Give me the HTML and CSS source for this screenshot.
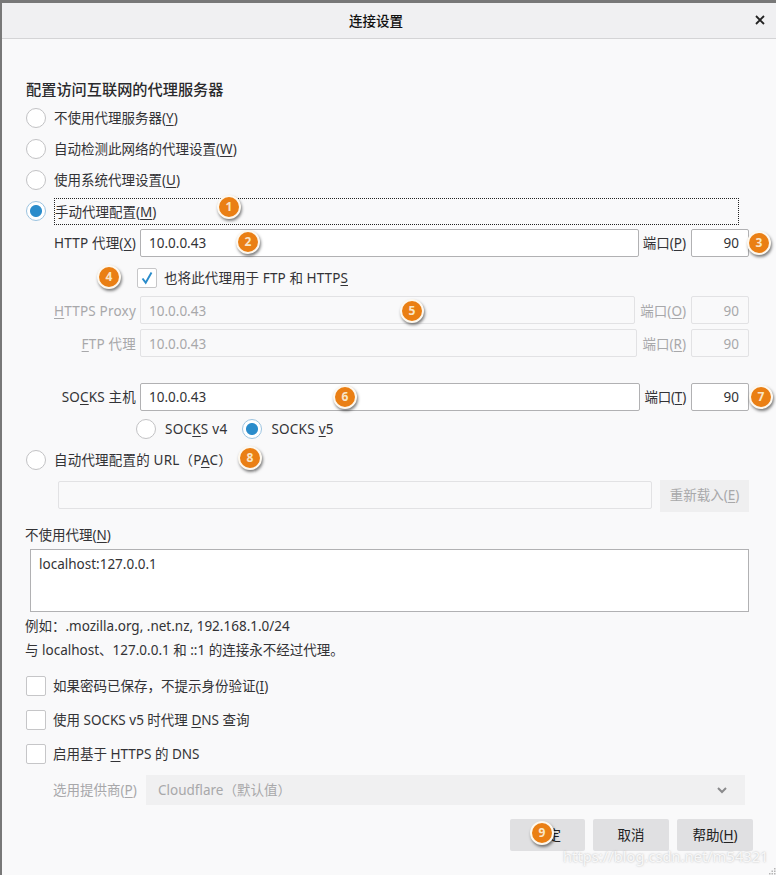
FILE: index.html
```html
<!DOCTYPE html>
<html lang="zh-CN">
<head>
<meta charset="utf-8">
<title>连接设置</title>
<link rel="stylesheet" href="styles.css">
</head>
<body>
<div class="window">
  <header class="titlebar">
    <h1 class="title">连接设置</h1>
    <svg class="close" width="12" height="12" viewBox="0 0 12 12"><path d="M2 2l8 8M10 2l-8 8" stroke="#222" stroke-width="1.8" fill="none"/></svg>
  </header>
  <main class="main">
    <h2 class="heading">配置访问互联网的代理服务器</h2>
    <div class="radio-row"><span class="radio"></span><span>不使用代理服务器(<u>Y</u>)</span></div>
    <div class="radio-row"><span class="radio"></span><span>自动检测此网络的代理设置(<u>W</u>)</span></div>
    <div class="radio-row"><span class="radio"></span><span>使用系统代理设置(<u>U</u>)</span></div>
    <div class="radio-row"><span class="radio on"></span><span class="focus-label">手动代理配置(<u>M</u>)</span></div>

    <div class="field-row http-row">
      <label class="field-label">HTTP 代理(<u>X</u>)</label>
      <input class="text-input" value="10.0.0.43" readonly>
      <label class="port-label">端口(<u>P</u>)</label>
      <input class="port-input" value="90" readonly>
    </div>
    <div class="share-row">
      <span class="checkbox"><svg width="20" height="20" viewBox="0 0 20 20"><path d="M5.5 10.5l3.2 4.2L14.5 4.5" stroke="#2a8ccb" stroke-width="1.9" fill="none"/></svg></span>
      <span>也将此代理用于 FTP 和 HTTP<u>S</u></span>
    </div>
    <div class="field-row https-row disabled">
      <label class="field-label"><u>H</u>TTPS Proxy</label>
      <input class="text-input" value="10.0.0.43" disabled>
      <label class="port-label">端口(<u>O</u>)</label>
      <input class="port-input" value="90" disabled>
    </div>
    <div class="field-row ftp-row disabled">
      <label class="field-label"><u>F</u>TP 代理</label>
      <input class="text-input" value="10.0.0.43" disabled>
      <label class="port-label">端口(<u>R</u>)</label>
      <input class="port-input" value="90" disabled>
    </div>
    <div class="field-row socks-row">
      <label class="field-label">SO<u>C</u>KS 主机</label>
      <input class="text-input" value="10.0.0.43" readonly>
      <label class="port-label">端口(<u>T</u>)</label>
      <input class="port-input" value="90" readonly>
    </div>
    <div class="socks-version">
      <span class="radio"></span><span class="version-label">SOC<u>K</u>S v4</span>
      <span class="radio on"></span><span class="version-label">SOCKS <u>v</u>5</span>
    </div>
    <div class="radio-row pac-row"><span class="radio"></span><span class="pac-label">自动代理配置的 URL（P<u>A</u>C）</span></div>
    <div class="pac-field">
      <input class="text-input pac-input" disabled>
      <span class="reload">重新载入(<u>E</u>)</span>
    </div>

    <label class="noproxy-label">不使用代理(<u>N</u>)</label>
    <textarea class="noproxy" readonly>localhost:127.0.0.1</textarea>
    <p class="note note-first">例如：.mozilla.org, .net.nz, 192.168.1.0/24</p>
    <p class="note">与 localhost、127.0.0.1 和 ::1 的连接永不经过代理。</p>

    <div class="check-row check-first"><span class="checkbox"></span><span>如果密码已保存，不提示身份验证(<u>I</u>)</span></div>
    <div class="check-row"><span class="checkbox"></span><span>使用 SOCKS v5 时代理 <u>D</u>NS 查询</span></div>
    <div class="check-row"><span class="checkbox"></span><span>启用基于 <u>H</u>TTPS 的 DNS</span></div>
    <div class="provider-row">
      <label class="provider-label">选用提供商(<u>P</u>)</label>
      <div class="select"><span>Cloudflare（默认值）</span>
        <svg width="12" height="8" viewBox="0 0 12 8"><path d="M2 2l4 4 4-4" stroke="#8a8a8c" stroke-width="2" fill="none"/></svg>
      </div>
    </div>
    <div class="actions">
      <button class="btn">确定</button>
      <button class="btn">取消</button>
      <button class="btn">帮助(<u>H</u>)</button>
    </div>
  </main>

  <span class="badge b1">1</span>
  <span class="badge b2">2</span>
  <span class="badge b3">3</span>
  <span class="badge b4">4</span>
  <span class="badge b5">5</span>
  <span class="badge b6">6</span>
  <span class="badge b7">7</span>
  <span class="badge b8">8</span>
  <span class="badge b9">9</span>
  <span class="watermark">https://blog.csdn.net/m54321</span>
  <svg class="grip" width="7" height="7" viewBox="0 0 7 7"><path d="M5 0h1.500v1.500H5zM2.500 2.500H4V4H2.500zM5 2.500h1.500V4H5zM0 5h1.500v1.500H0zM2.500 5H4v1.500H2.500zM5 5h1.500v1.500H5z" fill="#b5b5b5"/></svg>
</div>
</body>
</html>
```
FILE: styles.css
```css
* { box-sizing: border-box; }
html, body { margin: 0; padding: 0; }
body {
  width: 776px;
  height: 875px;
  overflow: hidden;
  font-family: "Noto Sans", "Noto Sans CJK SC", sans-serif;
  font-size: 13.5px;
  line-height: 20px;
  color: #333336;
}
u { text-underline-offset: 2px; text-decoration-thickness: 1px; }
.window {
  position: relative;
  width: 776px;
  height: 875px;
  background: #f9f9fa;
  border-top: 3px solid #787878;
  border-left: 2px solid #787878;
  overflow: hidden;
}
.titlebar {
  height: 36px;
  background: #f0f0f2;
  border-bottom: 1px solid #d4d4d6;
  display: flex;
  align-items: center;
  justify-content: center;
  position: relative;
  padding-right: 26px;
}
.title { margin: 0; font-size: 13.5px; font-weight: 500; color: #111; }
.close { position: absolute; right: 10px; top: 11px; }
.main { padding: 40px 27px 0 24px; }
.heading { margin: 0 0 3px; font-size: 15.2px; line-height: 20px; font-weight: 500; color: #2a2a2c; }

.radio-row { height: 31px; display: flex; align-items: center; gap: 8px; }
.radio {
  flex: none;
  width: 20px;
  height: 20px;
  border-radius: 50%;
  background: #fff;
  border: 1px solid #c2c2c4;
  display: block;
}
.radio.on {
  background: radial-gradient(circle, #2a8ccb 0 5.5px, #fff 6.5px);
  border-color: #9cc4e0;
}
.focus-label {
  flex: 1;
  height: 27px;
  line-height: 26px;
  margin: 2px 10px 0 0;
  border: 1px dotted #222;
}

.field-row { display: flex; align-items: center; height: 28px; }
.field-label { width: 110px; text-align: right; margin-right: 4px; flex: none; white-space: nowrap; letter-spacing: .2px; }
.text-input, .port-input {
  height: 28px;
  border: 1px solid #b1b1b3;
  border-radius: 2px;
  background: #fff;
  font: inherit;
  color: #333336;
  outline: none;
  padding: 0 8px;
}
.port-input { padding: 0 9px; }
.text-input { flex: 1; min-width: 0; }
.port-label { margin: 0 5px; flex: none; white-space: nowrap; }
.port-input { width: 58px; flex: none; text-align: right; }
.http-row { margin-top: 3px; }
.http-row .port-label { margin-left: 4px; }
.https-row { margin-top: 8px; }
.ftp-row { margin-top: 5px; }
.socks-row { margin-top: 26px; }
.socks-row .port-label { margin-left: 4px; letter-spacing: -.2px; }
.disabled, .disabled .text-input, .disabled .port-input { color: #a8a8aa; }
.disabled .text-input, .disabled .port-input, .pac-input { background: #f9f9fa; border-color: #e2e2e4; }
.disabled .text-input, .disabled .port-input { padding-top: 2px; }
.disabled .field-label, .disabled .port-label { margin-top: 2px; }

.share-row {
  display: flex;
  align-items: center;
  gap: 7px;
  height: 20px;
  margin-top: 11px;
  padding-left: 111px;
  letter-spacing: .1px;
}
.checkbox {
  flex: none;
  display: block;
  width: 20px;
  height: 20px;
  background: #fff;
  border: 1px solid #c6c6c8;
  border-radius: 2px;
}
.checkbox svg { display: block; margin: -1px; }

.socks-version { display: flex; align-items: center; margin-top: 8px; padding-left: 110px; height: 20px; }
.version-label { margin: 0 15px 0 9px; letter-spacing: .25px; }
.pac-row { margin-top: 5px; }
.pac-label { letter-spacing: .2px; }
.pac-field { display: flex; gap: 8px; margin-top: 5px; height: 32px; }
.pac-input { margin: 1px 0 0 32px; height: 28px; }
.reload {
  flex: none;
  width: 89px;
  height: 32px;
  line-height: 31px;
  text-align: center;
  background: #efeff0;
  color: #a8a8aa;
  font-size: 13.5px;
}

.noproxy-label { display: block; margin: 13px 0 0 -1px; }
.noproxy {
  display: block;
  width: 719px;
  height: 63px;
  margin: 4px 0 0 4px;
  padding: 4px 8px;
  border: 1px solid #b1b1b3;
  background: #fff;
  font: inherit;
  color: #333336;
  resize: none;
  outline: none;
}
.note { margin: 4px 0 0 -1px; }
.check-row { height: 34px; display: flex; align-items: center; gap: 7px; }
.check-first { margin-top: 9px; }
.provider-row { display: flex; align-items: center; margin: 4px 4px 0 27px; height: 30px; color: #a8a8aa; }
.provider-label { width: 93px; flex: none; }
.select {
  flex: 1;
  height: 30px;
  background: #f0f0f1;
  display: flex;
  align-items: center;
  justify-content: space-between;
  padding: 0 17px 0 12px;
}
.actions { display: flex; justify-content: flex-end; gap: 8px; margin: 14px -4px 0 0; }
.btn {
  width: 76px;
  height: 32px;
  border: 0;
  border-radius: 2px;
  background: #e0e0e2;
  font: inherit;
  color: #222;
  padding: 0;
}
.btn:first-child { width: 75px; }

.badge {
  position: absolute;
  width: 24px;
  height: 24px;
  border-radius: 50%;
  background: #ea7f14;
  border: 2px solid #fdf8ef;
  box-shadow: 1px 2px 3px rgba(0, 0, 0, .5);
  color: #f8e6c8;
  font-size: 12px;
  line-height: 20px;
  font-weight: 700;
  text-align: center;
}
.b1 { left: 215px; top: 192px; }
.b2 { left: 234px; top: 227px; }
.b3 { left: 745px; top: 228px; }
.b4 { left: 95px; top: 262px; }
.b5 { left: 398px; top: 296px; }
.b6 { left: 331px; top: 382px; }
.b7 { left: 747px; top: 382px; }
.b8 { left: 236px; top: 443px; }
.b9 { left: 528px; top: 818px; }
.watermark {
  position: absolute;
  left: 561px;
  top: 843px;
  font-size: 14.5px;
  letter-spacing: .1px;
  color: rgba(255, 255, 255, .85);
  text-shadow: 0 0 2px rgba(150, 150, 150, .7);
  white-space: nowrap;
}
.grip { position: absolute; right: 0; bottom: 0; }
```
